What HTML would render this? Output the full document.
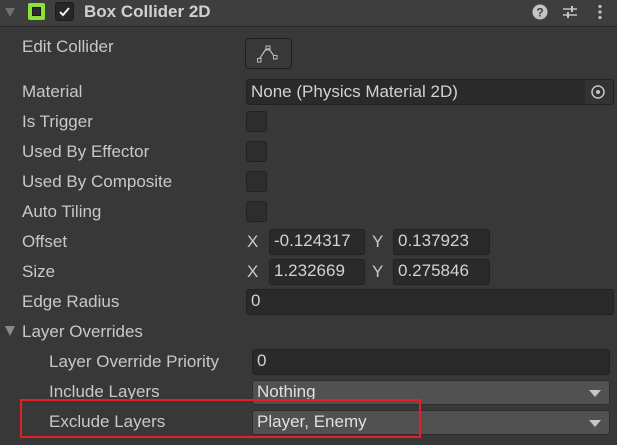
<!DOCTYPE html><html><head><style>
body{margin:0;width:617px;height:445px;background:#383838;overflow:hidden;font-family:"Liberation Sans",sans-serif;color:#c8c8c8;font-size:17px;position:relative}
.a{position:absolute}
.t{position:absolute;line-height:20px;white-space:nowrap}
.f{position:absolute;background:#2a2a2a;border:1px solid #212121;border-radius:3px;box-sizing:border-box;line-height:22px;padding-left:4px;color:#d2d2d2;white-space:nowrap}
.cb{position:absolute;left:246px;width:21px;height:21px;background:#2d2d2d;border:1px solid #222;border-radius:3px;box-sizing:border-box}
.dd{position:absolute;background:#515151;border:1px solid #2e2e2e;border-radius:3px;box-sizing:border-box;line-height:22px;padding-left:4px;color:#e0e0e0}
.dd:after{content:"";position:absolute;right:8px;top:9px;border-left:6px solid transparent;border-right:6px solid transparent;border-top:7px solid #c8c8c8}
</style></head><body>
<div class="a" style="left:0;top:0;width:617px;height:26px;background:#3e3e3e;border-bottom:1px solid #2a2a2a"></div>
<div class="a" style="left:5px;top:8px;border-left:5px solid transparent;border-right:5px solid transparent;border-top:9px solid #707070"></div>
<div class="a" style="left:28px;top:3px;width:17px;height:17px;background:#8fe03a;border-radius:2px"></div>
<div class="a" style="left:32px;top:7px;width:9px;height:9px;background:#2c2c2c;border:1px solid #1a1a1a;box-sizing:border-box"></div>
<div class="a" style="left:55px;top:2px;width:19px;height:19px;background:#262626;border:1px solid #1c1c1c;border-radius:3px;box-sizing:border-box"></div>
<svg class="a" style="left:57px;top:4px" width="15" height="15"><path d="M3 8 L6 11 L12 4" stroke="#eee" stroke-width="2" fill="none"/></svg>
<div class="t" style="left:84px;top:2px;font-weight:bold;color:#d0d0d0">Box Collider 2D</div>
<svg class="a" style="left:532px;top:4px" width="16" height="16"><circle cx="8" cy="8" r="7.5" fill="#c4c4c4"/><text x="8" y="12.5" font-size="12" font-weight="bold" text-anchor="middle" fill="#3e3e3e" font-family="Liberation Sans">?</text></svg>
<svg class="a" style="left:562px;top:4px" width="16" height="16"><path d="M1 5H15M1 11H15" stroke="#c4c4c4" stroke-width="1.6"/><path d="M10 2V8M6 8V14" stroke="#c4c4c4" stroke-width="2"/></svg>
<svg class="a" style="left:596px;top:4px" width="8" height="16"><circle cx="4" cy="2.5" r="1.6" fill="#c4c4c4"/><circle cx="4" cy="8" r="1.6" fill="#c4c4c4"/><circle cx="4" cy="13.5" r="1.6" fill="#c4c4c4"/></svg>

<div class="t" style="left:22px;top:37px">Edit Collider</div>
<div class="a" style="left:245px;top:38px;width:47px;height:31px;background:#383838;border:1px solid #1f1f1f;border-radius:4px;box-sizing:border-box"></div>
<svg class="a" style="left:255px;top:42px" width="26" height="22"><path d="M5 16 L11 7 L14 7 L19 14" stroke="#bbb" stroke-width="1.2" fill="none"/><rect x="11" y="4" width="4" height="4" stroke="#bbb" fill="none"/><rect x="2.5" y="16.5" width="3.5" height="3.5" stroke="#bbb" fill="none"/><rect x="18.5" y="13.5" width="3.5" height="3.5" stroke="#bbb" fill="none"/></svg>

<div class="t" style="left:22px;top:82px">Material</div>
<div class="f" style="left:246px;top:79px;width:368px;height:26px;line-height:24px">None (Physics Material 2D)</div>
<div class="a" style="left:585px;top:80px;width:28px;height:24px;background:#333;border-radius:0 3px 3px 0"></div>
<svg class="a" style="left:590px;top:84px" width="16" height="16"><circle cx="8" cy="8" r="6" stroke="#c4c4c4" stroke-width="1.5" fill="none"/><circle cx="8" cy="8" r="2" fill="#c4c4c4"/></svg>

<div class="t" style="left:22px;top:112px">Is Trigger</div><div class="cb" style="top:111px"></div>
<div class="t" style="left:22px;top:142px">Used By Effector</div><div class="cb" style="top:141px"></div>
<div class="t" style="left:22px;top:172px">Used By Composite</div><div class="cb" style="top:171px"></div>
<div class="t" style="left:22px;top:202px">Auto Tiling</div><div class="cb" style="top:201px"></div>

<div class="t" style="left:22px;top:232px">Offset</div>
<div class="t" style="left:247px;top:232px">X</div><div class="f" style="left:269px;top:229px;width:96px;height:26px">-0.124317</div>
<div class="t" style="left:372px;top:232px">Y</div><div class="f" style="left:393px;top:229px;width:97px;height:26px">0.137923</div>
<div class="t" style="left:22px;top:262px">Size</div>
<div class="t" style="left:247px;top:262px">X</div><div class="f" style="left:269px;top:259px;width:96px;height:26px">1.232669</div>
<div class="t" style="left:372px;top:262px">Y</div><div class="f" style="left:393px;top:259px;width:97px;height:26px">0.275846</div>
<div class="t" style="left:22px;top:292px">Edge Radius</div>
<div class="f" style="left:246px;top:289px;width:368px;height:26px">0</div>

<div class="a" style="left:5px;top:326px;border-left:5px solid transparent;border-right:5px solid transparent;border-top:10px solid #8a8a8a"></div>
<div class="t" style="left:22px;top:322px">Layer Overrides</div>
<div class="t" style="left:49px;top:352px">Layer Override Priority</div>
<div class="f" style="left:252px;top:349px;width:358px;height:26px">0</div>
<div class="t" style="left:49px;top:382px">Include Layers</div>
<div class="dd" style="left:252px;top:380px;width:358px;height:25px">Nothing</div>
<div class="t" style="left:49px;top:412px">Exclude Layers</div>
<div class="dd" style="left:252px;top:410px;width:358px;height:25px">Player, Enemy</div>
<div class="a" style="left:20px;top:399px;width:401px;height:39px;border:2px solid #e81d25;box-sizing:border-box"></div>
</body></html>
